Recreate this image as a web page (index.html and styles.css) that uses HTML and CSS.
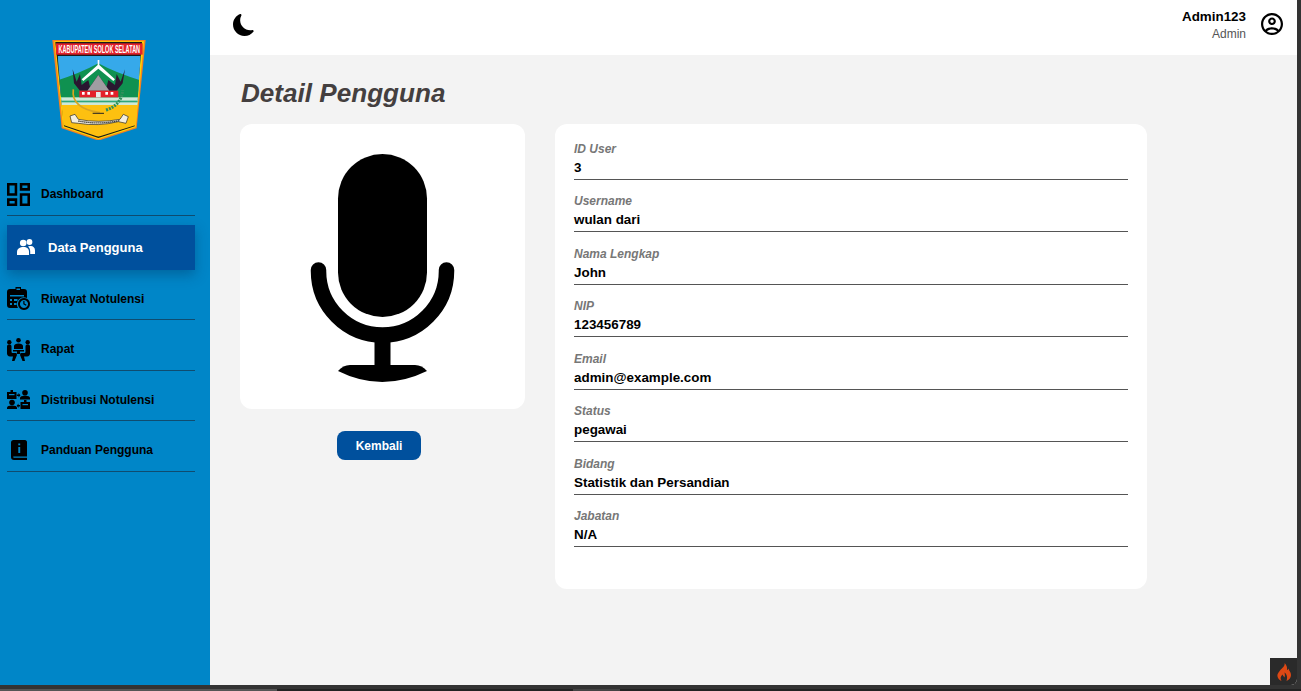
FILE: index.html
```html
<!DOCTYPE html>
<html lang="en">
<head>
    <meta charset="UTF-8">
    <meta name="viewport" content="width=device-width, initial-scale=1.0">
    <title>Detail Pengguna</title>
    <link rel="stylesheet" href="styles.css">
</head>
<body>
    <div class="window">
        <aside class="sidebar">
            <svg class="logo" viewBox="0 0 94 100" width="94" height="100">
                <defs>
                    <clipPath id="shield"><path d="M173 108H422L408 315L295 350L190 315Z"/></clipPath>
                </defs>
                <g transform="translate(-52 -20) scale(.3333)">
                    <path d="M157 60H437L410 325L295 362L185 325Z" fill="#f58220"/>
                    <path d="M163 64H432L407 322L295 358L189 322Z" fill="#ffd400"/>
                    <path d="M166 66H426L404 319L295 354L192 319Z" fill="#1a1a1a"/>
                    <g clip-path="url(#shield)">
                        <rect x="160" y="100" width="280" height="140" fill="#36a9ea"/>
                        <path d="M170 182Q240 160 295 130Q350 160 425 182V240H170Z" fill="#0f9150"/>
                        <rect x="160" y="232" width="280" height="24" fill="#cfe9d8"/>
                        <rect x="160" y="242" width="280" height="5" fill="#2fa77a"/>
                        <rect x="160" y="255" width="280" height="110" fill="#fdc010"/>
                    </g>
                    <rect x="168" y="70" width="260" height="34" fill="#e3202a"/>
                    <path d="M293 120H298V135L345 178L340 183L295 146L250 183L245 178L293 135Z" fill="#fff"/>
                    <path d="M218 148L222 190L240 212H350L368 190L375 148L362 185L350 162L345 195L325 180L320 200L295 165L270 200L265 180L245 195L240 162L230 185Z" fill="#2a1630"/>
                    <path d="M295 165L262 212H328Z" fill="#a09da2"/>
                    <rect x="238" y="212" width="117" height="20" fill="#e3202a"/>
                    <rect x="288" y="216" width="14" height="16" fill="#e8e8e8"/>
                    <path d="M246 216h8v8h-8zM262 216h8v8h-8zM316 216h8v8h-8zM332 216h8v8h-8z" fill="#fff"/>
                    <path d="M220 208Q212 265 300 278" fill="none" stroke="#d9a520" stroke-width="5"/>
                    <path d="M278 280H312" stroke="#222" stroke-width="3"/>
                    <path d="M318 270Q365 255 368 210" fill="none" stroke="#2f8f5a" stroke-width="9" stroke-dasharray="6 3"/>
                    <path d="M210 288L225 283L235 298Q295 310 360 298L370 283L385 290L378 310L355 305Q295 320 235 310L215 308Z" fill="#f4efe0" stroke="#222" stroke-width="2"/>
                    <path d="M235 303Q295 315 358 302" fill="none" stroke="#333" stroke-width="4" stroke-dasharray="4 2"/>
                </g>
                <text class="logo-title" transform="translate(47.300 13.200) scale(.48 1)" text-anchor="middle">KABUPATEN SOLOK SELATAN</text>
            </svg>
            <nav class="nav">
                <a class="nav-item">
                    <svg class="nav-icon" viewBox="3 3 18 18"><path d="M19 5v2h-4V5h4M9 5v6H5V5h4m10 8v6h-4v-6h4M9 17v2H5v-2h4M21 3h-8v6h8V3zM11 3H3v10h8V3zm10 8h-8v10h8V11zm-10 4H3v6h8v-6z"/></svg>
                    <span>Dashboard</span>
                </a>
                <a class="nav-item active">
                    <svg class="nav-icon-active" viewBox="0 0 18 16"><circle cx="6.200" cy="4" r="3.300"/><circle cx="12.500" cy="3" r="2.900"/><path d="M0 16V13C0 9.500 3 8 6.500 8S12 9.500 12 13V16Z"/><path d="M11 7.600C12 7 13.500 7 14 7C16 7 18 8.500 18 11.500V15H13.200V12.500C13.200 10.500 12.500 9 11 7.600Z"/></svg>
                    <span>Data Pengguna</span>
                </a>
                <a class="nav-item">
                    <svg class="nav-icon" viewBox="0 0 23 23"><path d="M6 2H8.500V0H14V2H17C19 2 20 3 20 5V11A7 7 0 0 0 11 21H3C1 21 0 20 0 18V5C0 3 1 2 3 2Z"/><path class="cut" d="M9.500 1.500H13V3H9.500ZM3 8H17V9.500H3ZM3 12H5V14H3ZM7 12H10.500V14H7ZM3 16H5V18H3ZM7 16H9.500V18H7Z"/><path d="M17 11A6 6 0 1 1 16.990 11ZM17 13A4 4 0 1 0 17.010 13Z"/><path d="M16.300 14H17.500V16.600L19.500 17.800L18.900 18.700L16.300 17.200Z"/></svg>
                    <span>Riwayat Notulensi</span>
                </a>
                <a class="nav-item">
                    <svg class="nav-icon" viewBox="0 0 23 23"><circle cx="11.500" cy="2.300" r="2.300"/><circle cx="2.300" cy="4.200" r="2.200"/><circle cx="20.700" cy="4.200" r="2.200"/><path d="M7 11V8C7 6.500 9 5.500 11.500 5.500S16 6.500 16 8V11Z"/><path d="M6 12H17V13.500H13V16H10V13.500H6Z"/><path d="M0 8.500C0 7 1 6.500 2.300 6.500S4.500 7 4.500 8.500V13.500C4.500 14.500 5 15 6 15H9.500L10 17L7.500 23H5L6 18.500H3C1 18.500 0 17 0 15.500Z"/><path d="M23 8.500C23 7 22 6.500 20.700 6.500S18.500 7 18.500 8.500V13.500C18.500 14.500 18 15 17 15H13.500L13 17L15.500 23H18L17 18.500H20C22 18.500 23 17 23 15.500Z"/></svg>
                    <span>Rapat</span>
                </a>
                <a class="nav-item">
                    <svg class="nav-icon nav-icon-wide" viewBox="0 0 23 19"><path d="M0 2H3.500V0H6V2H9.500V9H0Z"/><path class="cut" d="M2 4H7.500V5.200H2Z"/><circle cx="18" cy="2.800" r="2.800"/><path d="M13 9.500V8C13 6.500 15 5.700 18 5.700S23 6.500 23 8V9.500Z"/><circle cx="5" cy="12.500" r="2.800"/><path d="M0 19V17.800C0 16.300 2 15.500 5 15.500S10 16.300 10 17.800V19Z"/><path d="M13.500 12H17V10H19.500V12H23V19H13.500Z"/><path class="cut" d="M15.500 14H21V15.200H15.500Z"/><path d="M9.800 4.500H11.500V3L13.500 5.200L11.500 7.400V6H9.800ZM13 15H11.500V13.500L9.700 15.700L11.500 17.900V16.500H13Z"/></svg>
                    <span>Distribusi Notulensi</span>
                </a>
                <a class="nav-item">
                    <svg class="nav-icon nav-icon-book" viewBox="0 0 16 20"><path d="M2.500 0H14C15 0 16 1 16 2V20H3C1 20 0 18.800 0 17V2.500C0 1 1 0 2.500 0Z"/><path class="cut" d="M2.500 16.500H16V17.700H3C2 17.700 2 16.500 2.500 16.500ZM7.300 3.500H9.200V5.200H7.300ZM7.300 7H9.200V13H7.300Z"/></svg>
                    <span>Panduan Pengguna</span>
                </a>
            </nav>
        </aside>
        <div class="main">
            <header class="topbar">
                <svg class="moon" viewBox="0 0 16 16" width="22" height="22"><path d="M6 .278a.768.768 0 0 1 .08.858 7.208 7.208 0 0 0-.878 3.46c0 4.021 3.278 7.277 7.318 7.277.527 0 1.04-.055 1.533-.16a.787.787 0 0 1 .81.316.733.733 0 0 1-.031.893A8.349 8.349 0 0 1 8.344 16C3.734 16 0 12.286 0 7.71 0 4.266 2.114 1.312 5.124.06A.752.752 0 0 1 6 .278z"/></svg>
                <div class="user">
                    <div class="user-name">Admin123</div>
                    <div class="user-role">Admin</div>
                </div>
                <svg class="avatar" viewBox="2 2 20 20" width="22" height="22"><path d="M12 2C6.480 2 2 6.480 2 12s4.480 10 10 10 10-4.480 10-10S17.520 2 12 2zM7.350 18.500C8.660 17.560 10.260 17 12 17s3.340.56 4.650 1.500c-1.310.94-2.910 1.500-4.650 1.500s-3.340-.56-4.650-1.500zm10.790-1.380C16.450 15.800 14.320 15 12 15s-4.450.8-6.140 2.120C4.700 15.730 4 13.950 4 12c0-4.420 3.580-8 8-8s8 3.580 8 8c0 1.950-.7 3.730-1.860 5.120z"/><path d="M12 6c-1.930 0-3.500 1.570-3.500 3.500S10.070 13 12 13s3.500-1.570 3.500-3.500S13.930 6 12 6zm0 5c-.83 0-1.500-.67-1.500-1.500S11.170 8 12 8s1.500.67 1.500 1.500S12.830 11 12 11z"/></svg>
            </header>
            <main class="content">
                <h1 class="title">Detail Pengguna</h1>
                <div class="columns">
                    <div class="photo-col">
                        <div class="photo-card">
                            <svg class="mic" viewBox="0 0 165 245" width="165" height="245">
                                <rect x="38" y="9" width="89" height="163" rx="44.500"/>
                                <path class="mic-arc" d="M18.500 125V126A64 64 0 0 0 146.500 126V125"/>
                                <rect x="74.500" y="195" width="16" height="30"/>
                                <path d="M38 226Q43 220 50 220H115Q122 220 127 226Q82 248 38 226Z"/>
                            </svg>
                        </div>
                        <button class="back-button">Kembali</button>
                    </div>
                    <section class="detail-card">
                        <div class="field"><label>ID User</label><div>3</div></div>
                        <div class="field"><label>Username</label><div>wulan dari</div></div>
                        <div class="field"><label>Nama Lengkap</label><div>John</div></div>
                        <div class="field"><label>NIP</label><div>123456789</div></div>
                        <div class="field"><label>Email</label><div>admin@example.com</div></div>
                        <div class="field"><label>Status</label><div>pegawai</div></div>
                        <div class="field"><label>Bidang</label><div>Statistik dan Persandian</div></div>
                        <div class="field"><label>Jabatan</label><div>N/A</div></div>
                    </section>
                </div>
            </main>
        </div>
        <div class="debug-badge">
            <svg viewBox="0 0 14 18" width="14" height="18"><path d="M7.500 0C8.500 3 5 5 3 7.500C1 10 0 11.500 .5 13.500C1 15.500 2.500 17 4.500 18C3 15.500 3.500 13.500 5.500 11.500C6 13 7 13.500 7.500 14.500C8 13.500 8 11.500 7.500 9.500C9.500 11 11 13.500 9.500 18C12 17 14 15 14 12C14 9 12 8 11.500 5.500C11 6.500 10.500 7 10 7C10.500 4.500 9.500 1.500 7.500 0Z"/></svg>
        </div>
    </div>
    <div class="scrollbar"><div class="thumb-a"></div><div class="thumb-b"></div></div>
</body>
</html>
```

FILE: styles.css
```css
body {
    font-family: "Liberation Sans", Arial, sans-serif;
    background-color: #333;
    margin: 0;
    height: 691px;
    overflow: hidden;
}
.window {
    position: relative;
    display: flex;
    width: 1297px;
    height: 685px;
    background-color: #f3f3f3;
    border-bottom-right-radius: 6px;
    overflow: hidden;
}
.sidebar {
    width: 210px;
    flex-shrink: 0;
    background-color: #0086c8;
    padding-top: 40px;
    box-sizing: border-box;
}
.logo {
    display: block;
    margin-left: 52px;
}
.logo-title {
    font-size: 11.500px;
    font-weight: bold;
    fill: #fff;
}
.nav {
    margin: 25px 15px 0 7px;
}
.nav-item {
    display: flex;
    align-items: center;
    gap: 11px;
    height: 50.500px;
    padding-top: 9px;
    box-sizing: border-box;
    border-bottom: 1px solid #0f4c70;
    font-size: 12px;
    font-weight: bold;
    color: #000;
}
.nav-item.active {
    height: 45px;
    margin-top: 9px;
    padding: 0 0 0 10px;
    gap: 13px;
    border-bottom: none;
    background-color: #00509d;
    color: #fff;
    font-size: 13px;
    box-shadow: 0 5px 12px rgba(0, 40, 80, 0.35);
}
.nav-icon {
    width: 23px;
    height: 23px;
    flex-shrink: 0;
}
.nav-icon-wide {
    height: 19px;
}
.nav-icon-book {
    width: 16px;
    height: 20px;
    margin: 0 3px 0 4px;
}
.nav-icon .cut {
    fill: #0086c8;
}
.nav-icon-active {
    width: 18px;
    height: 16px;
    fill: #fff;
    flex-shrink: 0;
}
.main {
    flex: 1;
    min-width: 0;
}
.topbar {
    display: flex;
    align-items: center;
    height: 55px;
    padding: 0 14px 0 23px;
    background-color: #fff;
}
.moon {
    margin-right: auto;
    margin-top: -5px;
}
.user {
    text-align: right;
    margin-right: 15px;
    margin-top: -6px;
}
.user-name {
    font-size: 13.400px;
    font-weight: bold;
    color: #000;
}
.user-role {
    font-size: 12px;
    color: #555;
    margin-top: 3px;
}
.avatar {
    margin-top: -7px;
}
.content {
    padding: 0 150px 0 30px;
}
.title {
    margin: 0 0 0 1px;
    padding-top: 22px;
    height: 47px;
    font-size: 26.100px;
    line-height: 32px;
    font-style: italic;
    font-weight: bold;
    color: #443f3f;
}
.columns {
    display: flex;
    gap: 30px;
    align-items: flex-start;
}
.photo-col {
    display: flex;
    flex-direction: column;
    align-items: center;
    width: 285px;
}
.photo-card {
    width: 285px;
    height: 285px;
    padding-top: 21px;
    box-sizing: border-box;
    background-color: #fff;
    border-radius: 12px;
    display: flex;
    justify-content: center;
    align-items: flex-start;
}
.mic-arc {
    fill: none;
    stroke: #000;
    stroke-width: 15.500;
    stroke-linecap: round;
}
.back-button {
    margin: 22px 7px 0 0;
    width: 84px;
    height: 29px;
    border: none;
    border-radius: 8px;
    background-color: #00509d;
    color: #fff;
    font-family: inherit;
    font-size: 12px;
    font-weight: bold;
}
.detail-card {
    width: 592px;
    height: 465px;
    padding: 15.500px 19px 0;
    box-sizing: border-box;
    background-color: #fff;
    border-radius: 12px;
}
.field {
    height: 40px;
    margin-bottom: 12.500px;
    padding-top: 1px;
    box-sizing: border-box;
    border-bottom: 1px solid #555;
    font-size: 13.400px;
    font-weight: bold;
    line-height: 18px;
    color: #000;
}
.field label {
    display: block;
    font-size: 12px;
    font-style: italic;
    line-height: 16px;
    margin-bottom: 2px;
    color: #777;
}
.debug-badge {
    position: absolute;
    right: 0;
    bottom: 0;
    width: 27px;
    height: 27px;
    background-color: #2a2a2a;
    display: flex;
    align-items: center;
    justify-content: center;
    fill: #dd4814;
}
.scrollbar {
    position: relative;
    margin-top: 4px;
    height: 2px;
    background-color: #222;
}
.thumb-a {
    position: absolute;
    left: 0;
    width: 277px;
    height: 2px;
    background-color: #555;
}
.thumb-b {
    position: absolute;
    left: 573px;
    width: 47px;
    height: 2px;
    background-color: #444;
}
```
